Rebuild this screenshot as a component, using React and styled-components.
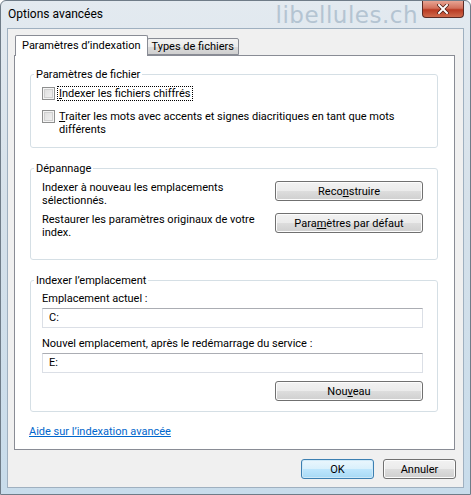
import React from 'react';
import styled, { createGlobalStyle } from 'styled-components';

const GlobalStyle = createGlobalStyle`
  html, body {
    margin: 0;
    padding: 0;
    background: #ffffff;
  }
  body {
    font-family: Roboto, 'Noto Sans', sans-serif;
    font-size: 11px;
    color: #000;
  }
`;

const Window = styled.div`
  width: 471px;
  height: 495px;
  box-sizing: border-box;
  display: flex;
  flex-direction: column;
  border: 1px solid #6f7c88;
  border-radius: 6px 6px 0 0;
  background: linear-gradient(180deg, #e3eaf0 0%, #d6e1ea 40%, #c8dceb 100%);
  overflow: hidden;
`;

const TitleBar = styled.div`
  height: 27px;
  display: flex;
  align-items: flex-start;
  padding-left: 7px;
  flex-shrink: 0;
`;

const Title = styled.span`
  font-size: 12px;
  line-height: 27px;
  height: 27px;
`;

const Watermark = styled.span`
  margin-left: auto;
  margin-top: 1px;
  font-family: 'DejaVu Sans', 'Noto Sans', sans-serif;
  font-size: 23px;
  letter-spacing: 0.5px;
  line-height: 26px;
  color: #b4c4d2;
`;

const CloseButton = styled.div`
  width: 42px;
  height: 17px;
  margin: 0 6px 0 4px;
  box-sizing: border-box;
  border: 1px solid #5a2a24;
  border-top: none;
  border-radius: 0 0 4px 4px;
  background: linear-gradient(180deg, #e8a493 0%, #d2705b 45%, #b93a22 55%, #cf6a4c 100%);
  display: flex;
  align-items: center;
  justify-content: center;
`;

const Client = styled.div`
  flex: 1;
  margin: 0 6px 6px 6px;
  border: 1px solid #9fb0c0;
  background: #f0f0f0;
  padding: 6px 8px 0 6px;
  display: flex;
  flex-direction: column;
`;

const TabStrip = styled.div`
  display: flex;
  align-items: flex-end;
  height: 20px;
  padding-left: 1px;
  position: relative;
  z-index: 1;
`;

const Tab = styled.div`
  box-sizing: border-box;
  height: ${(p) => (p.$active ? '21px' : '17px')};
  padding: 0 ${(p) => (p.$active ? 6 : 4)}px;
  line-height: ${(p) => (p.$active ? '19px' : '16px')};
  border: 1px solid #898c95;
  border-bottom: ${(p) => (p.$active ? 'none' : '1px solid #898c95')};
  border-radius: 2px 2px 0 0;
  background: ${(p) =>
    p.$active ? '#ffffff' : 'linear-gradient(180deg, #f2f2f2 0%, #ebebeb 50%, #dcdcdc 51%, #cfcfcf 100%)'};
  margin-left: ${(p) => (p.$active ? '0' : '-1px')};
  margin-bottom: ${(p) => (p.$active ? '-1px' : '0')};
  white-space: nowrap;
`;

const Panel = styled.div`
  height: 395px;
  box-sizing: border-box;
  background: #ffffff;
  border: 1px solid #898c95;
  padding: 12px 16px 0 15px;
`;

const Group = styled.fieldset`
  margin: 0 0 ${(p) => p.$gap || 14}px 0;
  padding: 0 14px ${(p) => p.$pb || 10}px 11px;
  border: 1px solid #d5dfe5;
  border-radius: 3px;
  min-width: 0;
`;

const Legend = styled.legend`
  padding: 0 2px;
  margin-left: -8px;
  line-height: 13px;
  color: #000;
`;

const CheckRow = styled.div`
  display: flex;
  align-items: flex-start;
  margin-top: ${(p) => p.$mt || 0}px;
  line-height: 13px;
`;

const CheckBox = styled.span`
  flex-shrink: 0;
  width: 13px;
  height: 13px;
  box-sizing: border-box;
  margin-right: 3px;
  border: 1px solid #8e8f8f;
  background: linear-gradient(135deg, #dcdcdc 0%, #f4f4f4 100%);
  box-shadow: inset 0 0 0 1px #f4f4f4, inset 0 0 0 2px #cfcfcf;
`;

const CheckLabel = styled.span`
  outline: ${(p) => (p.$focus ? '1px dotted #000' : 'none')};
  outline-offset: 0;
  padding: 0 1px;
`;

const Mn = styled.span`
  text-decoration: underline;
  text-underline-offset: 1px;
`;

const ActionRow = styled.div`
  display: flex;
  justify-content: space-between;
  align-items: flex-start;
  margin-top: ${(p) => p.$mt || 0}px;
  line-height: 13px;
`;

const ActionText = styled.div`
  width: 225px;
`;

const Button = styled.button`
  width: ${(p) => p.$w || 148}px;
  height: 20px;
  box-sizing: border-box;
  padding: 0;
  margin: 0;
  font-family: inherit;
  font-size: 11px;
  color: #000;
  border: 1px solid ${(p) => (p.$default ? '#3c7fb1' : '#707070')};
  border-radius: 3px;
  background: ${(p) =>
    p.$default
      ? 'linear-gradient(180deg, #eaf6fd 0%, #d9f0fc 50%, #bee6fd 51%, #a7d9f5 100%)'
      : 'linear-gradient(180deg, #f2f2f2 0%, #ebebeb 50%, #dddddd 51%, #cfcfcf 100%)'};
  box-shadow: inset 0 0 0 1px ${(p) => (p.$default ? '#cfe9f8' : '#fcfcfc')};
  flex-shrink: 0;
`;

const FieldLabel = styled.div`
  line-height: 13px;
  margin-top: ${(p) => p.$mt || 0}px;
`;

const TextBox = styled.div`
  height: 20px;
  box-sizing: border-box;
  margin-top: 3px;
  border: 1px solid #dbdfe6;
  border-top-color: #abadb3;
  padding: 0 6px;
  line-height: 18px;
  background: #fff;
`;

const RightRow = styled.div`
  display: flex;
  justify-content: flex-end;
  margin-top: 8px;
`;

const HelpLink = styled.a`
  display: block;
  line-height: 13px;
  margin-left: -1px;
  color: #0066cc;
  text-decoration: underline;
  cursor: pointer;
`;

const Footer = styled.div`
  display: flex;
  justify-content: flex-end;
  gap: 9px;
  margin-top: 9px;
  margin-right: -1px;
`;

export default function App() {
  return (
    <>
      <GlobalStyle />
      <Window>
        <TitleBar>
          <Title>Options avancées</Title>
          <Watermark>libellules.ch</Watermark>
          <CloseButton>
            <svg width="12" height="10" viewBox="0 0 12 10">
              <path d="M2 1 L10 9 M10 1 L2 9" stroke="#4a1a10" strokeWidth="3.4" strokeLinecap="square" />
              <path d="M2 1 L10 9 M10 1 L2 9" stroke="#ffffff" strokeWidth="2" strokeLinecap="square" />
            </svg>
          </CloseButton>
        </TitleBar>
        <Client>
          <TabStrip>
            <Tab $active>Paramètres d’indexation</Tab>
            <Tab>Types de fichiers</Tab>
          </TabStrip>
          <Panel>
            <Group $pb={11}>
              <Legend>Paramètres de fichier</Legend>
              <CheckRow $mt={6}>
                <CheckBox />
                <CheckLabel $focus>
                  <Mn>I</Mn>ndexer les fichiers chiffrés
                </CheckLabel>
              </CheckRow>
              <CheckRow $mt={10}>
                <CheckBox />
                <CheckLabel>
                  <Mn>T</Mn>raiter les mots avec accents et signes diacritiques en tant que mots
                  <br />
                  différents
                </CheckLabel>
              </CheckRow>
            </Group>

            <Group $pb={20}>
              <Legend>Dépannage</Legend>
              <ActionRow $mt={6}>
                <ActionText>
                  Indexer à nouveau les emplacements
                  <br />
                  sélectionnés.
                </ActionText>
                <Button>
                  Reco<Mn>n</Mn>struire
                </Button>
              </ActionRow>
              <ActionRow $mt={6}>
                <ActionText>
                  Restaurer les paramètres originaux de votre
                  <br />
                  index.
                </ActionText>
                <Button>
                  Para<Mn>m</Mn>ètres par défaut
                </Button>
              </ActionRow>
            </Group>

            <Group $pb={10} $gap={13}>
              <Legend>Indexer l’emplacement</Legend>
              <FieldLabel $mt={5}>Emplacement actuel :</FieldLabel>
              <TextBox>C:</TextBox>
              <FieldLabel $mt={9}>Nouvel emplacement, après le redémarrage du service :</FieldLabel>
              <TextBox>E:</TextBox>
              <RightRow>
                <Button>
                  Nou<Mn>v</Mn>eau
                </Button>
              </RightRow>
            </Group>

            <HelpLink>Aide sur l’indexation avancée</HelpLink>
          </Panel>
          <Footer>
            <Button $default $w={73}>OK</Button>
            <Button $w={73}>Annuler</Button>
          </Footer>
        </Client>
      </Window>
    </>
  );
}
